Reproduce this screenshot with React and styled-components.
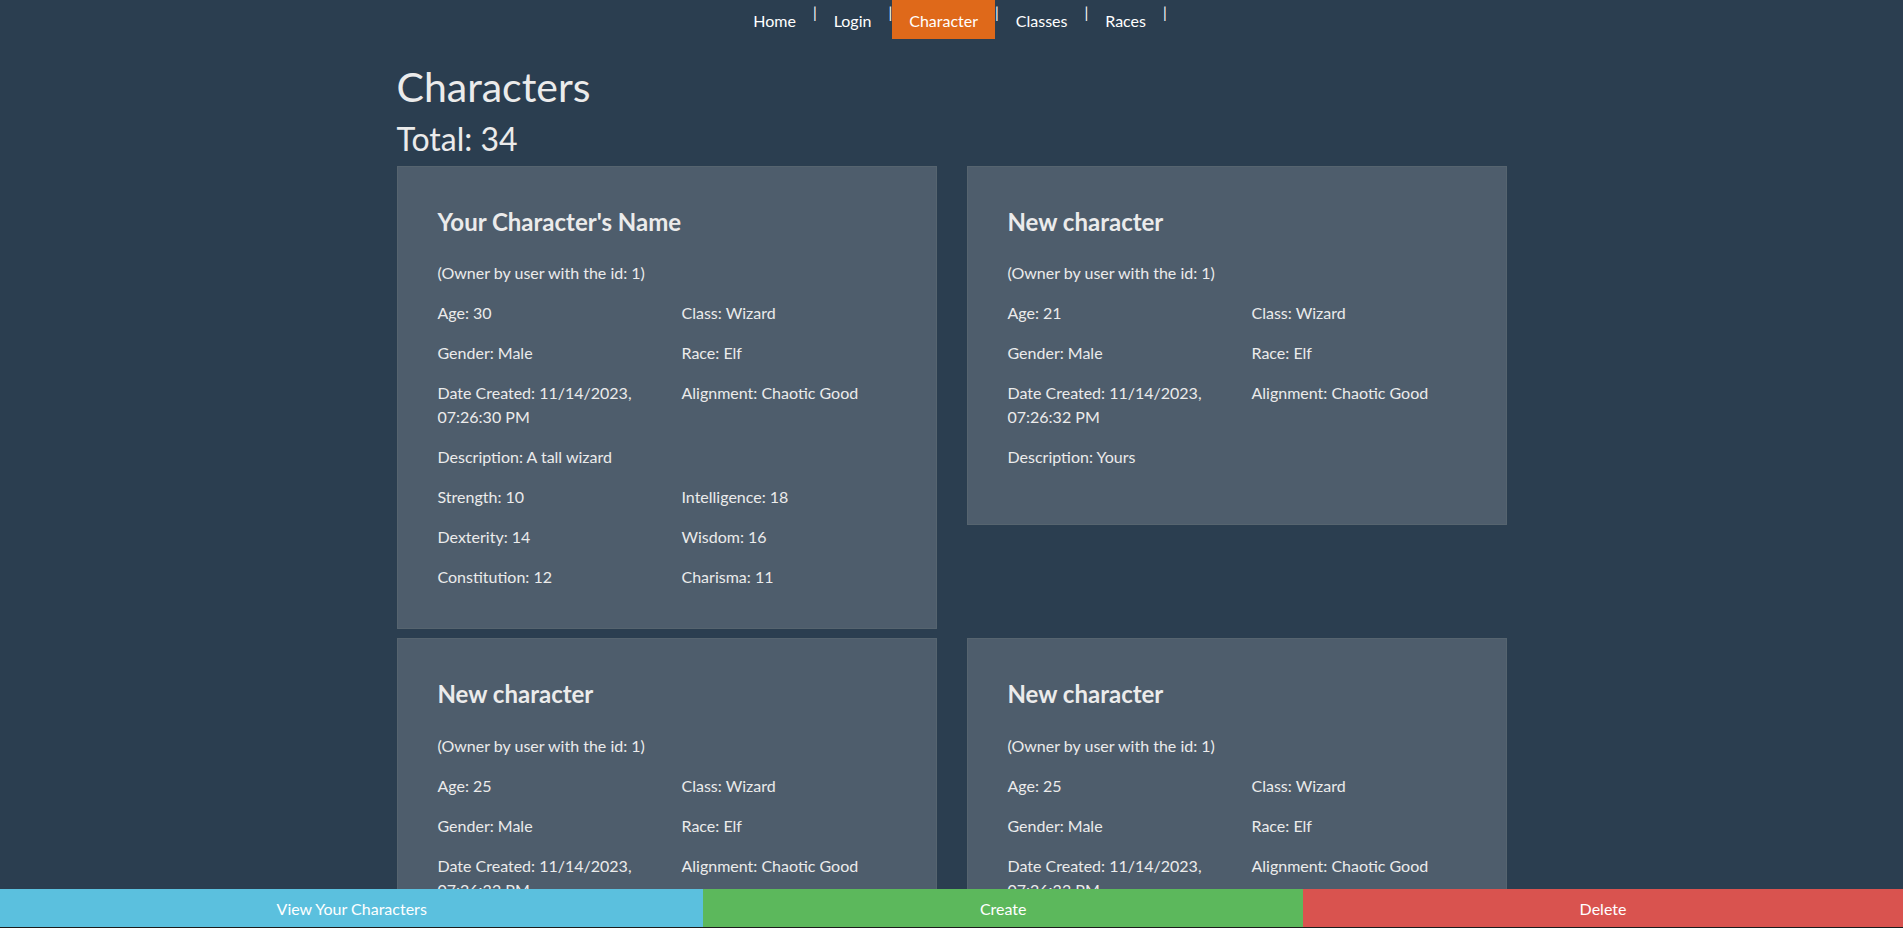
import React from 'react';
import styled, { createGlobalStyle } from 'styled-components';

const colors = {
	page: '#2b3e50',
	card: '#4e5d6c',
	cardBorder: '#56646f',
	text: '#ebebeb',
	primary: '#df691a',
	info: '#5bc0de',
	success: '#5cb85c',
	danger: '#d9534f'
};

const GlobalStyle = createGlobalStyle`
	html {
		scrollbar-width: none;
	}
	body {
		margin: 0;
		background-color: ${colors.page};
		color: ${colors.text};
		font-family: Lato, "Open Sans", Arial, sans-serif;
		font-size: 16px;
		line-height: 1.5;
	}
	* {
		box-sizing: border-box;
	}
`;

const NavBar = styled.nav`
	display: flex;
	justify-content: center;
	height: 39px;
`;

const NavItem = styled.a`
	display: flex;
	align-items: center;
	height: 39px;
	padding: 2px 17px 0;
	font-size: 16px;
	color: #fff;
	text-decoration: none;
	background-color: ${props => (props.active ? colors.primary : 'transparent')};
	cursor: pointer;
`;

const NavSeparator = styled.span`
	align-self: flex-start;
	margin-top: 3px;
	font-size: 15px;
	line-height: 18px;
	color: #fff;
`;

const Container = styled.main`
	width: 1110px;
	margin: 0 auto;
	padding: 23px 0 80px;
`;

const PageTitle = styled.h1`
	margin: 0 0 9px;
	font-size: 41px;
	font-weight: 400;
	line-height: 1.2;
`;

const Total = styled.h2`
	margin: 0 0 7px;
	font-size: 32px;
	font-weight: 400;
	line-height: 1.2;
`;

const CardGrid = styled.div`
	display: grid;
	grid-template-columns: repeat(2, 540px);
	column-gap: 30px;
	row-gap: 9px;
	align-items: start;
`;

const Card = styled.article`
	background-color: ${colors.card};
	border: 1px solid ${colors.cardBorder};
	padding: 41px 40px 39px;
`;

const CardTitle = styled.h3`
	margin: 0 0 25px;
	font-size: 24px;
	font-weight: 700;
	line-height: 1.2;
`;

const Text = styled.p`
	margin: 0 0 16px;
`;

const FieldGrid = styled.div`
	display: grid;
	grid-template-columns: repeat(2, 1fr);
	column-gap: 30px;
	row-gap: 16px;
	margin-bottom: ${props => (props.last ? '0' : '16px')};
	p {
		margin: 0;
	}
`;

const ActionBar = styled.div`
	position: fixed;
	left: 0;
	right: 0;
	bottom: 0;
	display: flex;
	height: 39px;
	border-bottom: 1px solid #1c1c1c;
`;

const ActionButton = styled.button`
	flex: 1 1 auto;
	border: none;
	margin: 0;
	padding: 0 12px;
	font-family: inherit;
	font-size: 16px;
	color: #fff;
	background-color: ${props => colors[props.variant]};
	cursor: pointer;
`;

const characters = [
	{
		name: "Your Character's Name",
		age: 30,
		created: '11/14/2023, 07:26:30 PM',
		description: 'A tall wizard',
		stats: { strength: 10, intelligence: 18, dexterity: 14, wisdom: 16, constitution: 12, charisma: 11 }
	},
	{ name: 'New character', age: 21, created: '11/14/2023, 07:26:32 PM', description: 'Yours' },
	{ name: 'New character', age: 25, created: '11/14/2023, 07:26:32 PM', description: 'Yours' },
	{ name: 'New character', age: 25, created: '11/14/2023, 07:26:33 PM', description: 'Yours' }
];

const CharacterCard = ({ character }) => {
	const s = character.stats;
	return (
		<Card>
			<CardTitle>{character.name}</CardTitle>
			<Text>(Owner by user with the id: 1)</Text>
			<FieldGrid>
				<p>Age: {character.age}</p>
				<p>Class: Wizard</p>
				<p>Gender: Male</p>
				<p>Race: Elf</p>
				<p>Date Created: {character.created}</p>
				<p>Alignment: Chaotic Good</p>
			</FieldGrid>
			<Text>Description: {character.description}</Text>
			{s && (
				<FieldGrid last>
					<p>Strength: {s.strength}</p>
					<p>Intelligence: {s.intelligence}</p>
					<p>Dexterity: {s.dexterity}</p>
					<p>Wisdom: {s.wisdom}</p>
					<p>Constitution: {s.constitution}</p>
					<p>Charisma: {s.charisma}</p>
				</FieldGrid>
			)}
		</Card>
	);
};

const navLinks = ['Home', 'Login', 'Character', 'Classes', 'Races'];

const App = () => (
	<>
		<GlobalStyle />
		<NavBar>
			{navLinks.map(link => (
				<React.Fragment key={link}>
					<NavItem active={link === 'Character'}>{link}</NavItem>
					<NavSeparator>|</NavSeparator>
				</React.Fragment>
			))}
		</NavBar>
		<Container>
			<PageTitle>Characters</PageTitle>
			<Total>Total: 34</Total>
			<CardGrid>
				{characters.map((c, i) => (
					<CharacterCard key={i} character={c} />
				))}
			</CardGrid>
		</Container>
		<ActionBar>
			<ActionButton variant="info">View Your Characters</ActionButton>
			<ActionButton variant="success">Create</ActionButton>
			<ActionButton variant="danger">Delete</ActionButton>
		</ActionBar>
	</>
);

export default App;
